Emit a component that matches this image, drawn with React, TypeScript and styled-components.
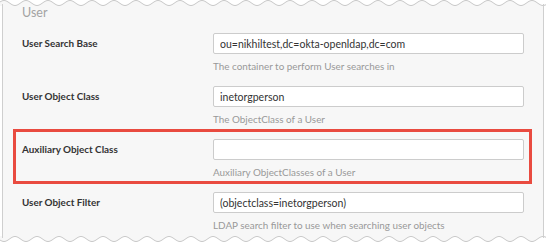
import React from "react";
import styled, { createGlobalStyle } from "styled-components";

const GlobalStyle = createGlobalStyle`
  html, body {
    margin: 0;
    padding: 0;
    background: #fff;
  }
  body {
    font-family: "Lato", "Liberation Sans", sans-serif;
  }
`;

const Frame = styled.div`
  width: 546px;
  height: 242px;
  overflow: hidden;
  display: flex;
  flex-direction: column;
`;

const WaveSvg = styled.svg`
  display: block;
  flex: none;
`;

const Panel = styled.div`
  flex: 1;
  margin: 0 2px;
  background: #f7f7f7;
  border-left: 1px solid #cfcfcf;
  border-right: 1px solid #cfcfcf;
  padding: 0 19px;
  display: flex;
  flex-direction: column;
`;

const Heading = styled.h3`
  margin: 0 0 13px;
  height: 14px;
  line-height: 14px;
  font-size: 12.5px;
  font-weight: 400;
  color: #a3a3a3;
`;

const Rows = styled.div`
  display: flex;
  flex-direction: column;
  gap: 13px;
`;

const Row = styled.div<{ $highlight?: boolean }>`
  position: relative;
  display: grid;
  grid-template-columns: 191px 311px;
  align-items: start;

  ${(p) =>
    p.$highlight &&
    `
    &::before {
      content: "";
      position: absolute;
      left: -9px;
      top: -10px;
      right: -8px;
      bottom: -5px;
      border: 3px solid #e94b40;
      pointer-events: none;
    }
  `}
`;

const Label = styled.label`
  line-height: 21px;
  font-size: 9.9px;
  font-weight: 700;
  color: #333;
`;

const Field = styled.div`
  display: flex;
  flex-direction: column;
  gap: 5px;
`;

const Input = styled.input`
  box-sizing: border-box;
  width: 311px;
  height: 21px;
  margin: 0;
  padding: 0 6px;
  border: 1px solid #cccccc;
  border-radius: 2px;
  background: #fff;
  font-family: "Lato", "Liberation Sans", sans-serif;
  font-size: 10.5px;
  color: #333;
  outline: none;
`;

const Help = styled.div`
  font-size: 9.9px;
  line-height: 14px;
  color: #999;
`;

const wavePath = (top: boolean) => {
  const w = 546;
  const period = 22;
  let d = "";
  for (let x = 0; x <= w; x += 1) {
    const c = Math.cos((2 * Math.PI * (x - 4)) / period);
    const y = top ? 3 - 2.5 * c : 3 + 2.5 * c;
    d += `${x === 0 ? "M" : "L"}${x},${y.toFixed(2)}`;
  }
  return d;
};

const Wave: React.FC<{ top?: boolean }> = ({ top }) => {
  const line = wavePath(!!top);
  const fill = top ? `${line}L546,6L0,6Z` : `${line}L546,0L0,0Z`;
  return (
    <WaveSvg width={546} height={6} viewBox="0 0 546 6">
      <path d={fill} fill="#f7f7f7" />
      <path d={line} fill="none" stroke="#c9c9c9" strokeWidth={1} />
      <rect x={2} y={top ? 4 : 0} width={1} height={2} fill="#cfcfcf" />
      <rect x={543} y={top ? 4 : 0} width={1} height={2} fill="#cfcfcf" />
    </WaveSvg>
  );
};

const fields = [
  {
    label: "User Search Base",
    value: "ou=nikhiltest,dc=okta-openldap,dc=com",
    help: "The container to perform User searches in",
  },
  {
    label: "User Object Class",
    value: "inetorgperson",
    help: "The ObjectClass of a User",
  },
  {
    label: "Auxiliary Object Class",
    value: "",
    help: "Auxiliary ObjectClasses of a User",
    highlight: true,
  },
  {
    label: "User Object Filter",
    value: "(objectclass=inetorgperson)",
    help: "LDAP search filter to use when searching user objects",
  },
];

const App: React.FC = () => {
  return (
    <Frame>
      <GlobalStyle />
      <Wave top />
      <Panel>
        <Heading>User</Heading>
        <Rows>
          {fields.map((f) => (
            <Row key={f.label} $highlight={f.highlight}>
              <Label>{f.label}</Label>
              <Field>
                <Input defaultValue={f.value} readOnly />
                <Help>{f.help}</Help>
              </Field>
            </Row>
          ))}
        </Rows>
      </Panel>
      <Wave />
    </Frame>
  );
};

export default App;
